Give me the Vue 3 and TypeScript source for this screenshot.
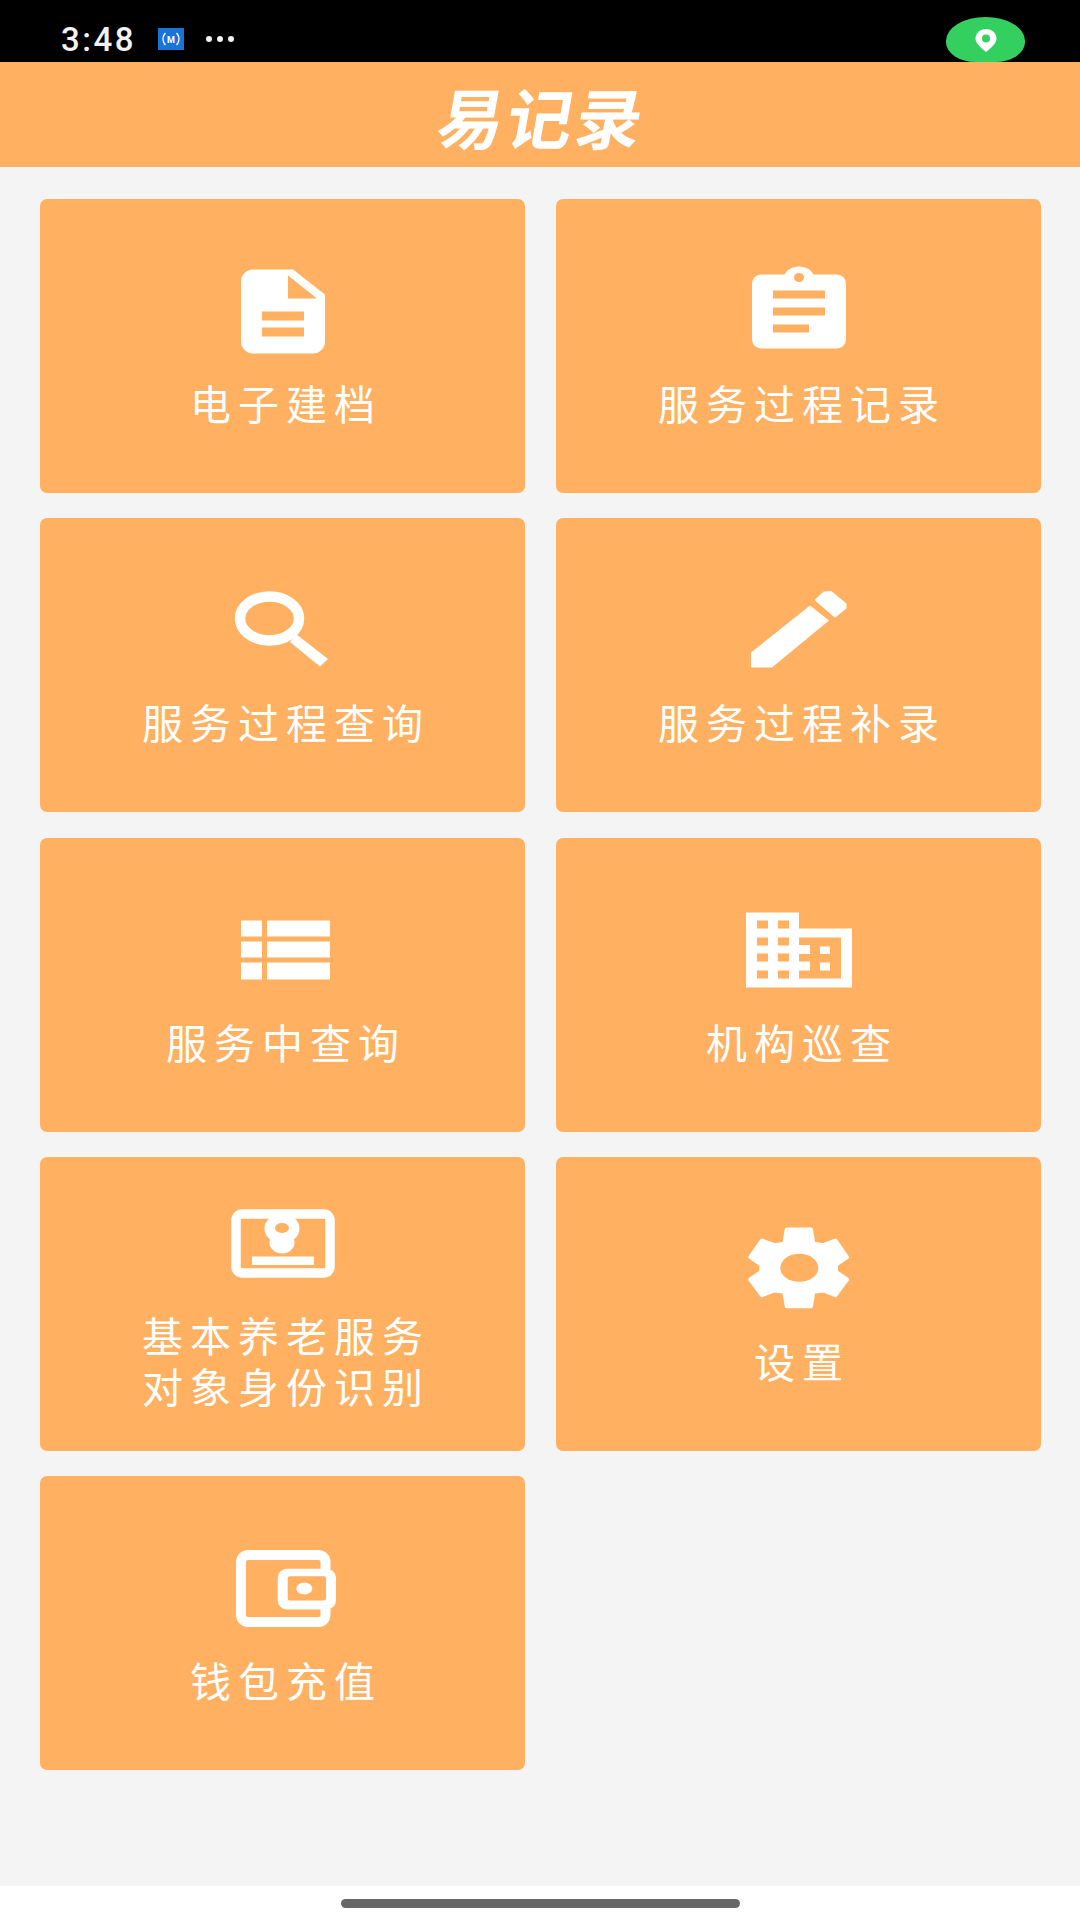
<script setup lang="ts">
interface MenuItem {
  icon: string;
  lines: string[];
}

const items: MenuItem[] = [
  { icon: 'doc', lines: ['电子建档'] },
  { icon: 'clipboard', lines: ['服务过程记录'] },
  { icon: 'search', lines: ['服务过程查询'] },
  { icon: 'pencil', lines: ['服务过程补录'] },
  { icon: 'list', lines: ['服务中查询'] },
  { icon: 'building', lines: ['机构巡查'] },
  { icon: 'idcard', lines: ['基本养老服务', '对象身份识别'] },
  { icon: 'gear', lines: ['设置'] },
  { icon: 'wallet', lines: ['钱包充值'] }
];
</script>

<template>
  <div class="page">
    <div class="status-bar">
      <span class="time">3:48</span>
      <span class="hotspot">
        <svg viewBox="0 0 26 22" width="26" height="22">
          <path d="M7 5.5a9 9 0 0 0 0 11M19 5.5a9 9 0 0 1 0 11" fill="none" stroke="#fff" stroke-width="1.5" stroke-linecap="round" />
          <text x="13" y="14.5" text-anchor="middle" class="hotspot-m">M</text>
        </svg>
      </span>
      <span class="dots"><i></i><i></i><i></i></span>
      <span class="location">
        <svg viewBox="0 0 24 24" width="24" height="24">
          <path d="M12 1C6 1 1.5 5.4 1.5 10.8 1.5 15.5 7.5 20.5 12 24c4.5-3.5 10.5-8.5 10.5-13.2C22.5 5.4 18 1 12 1z" fill="#fff" />
          <circle cx="12" cy="10.5" r="4" fill="#34d05f" />
        </svg>
      </span>
    </div>

    <header class="title-bar">
      <h1 class="title">易记录</h1>
    </header>

    <main class="content">
      <div class="menu">
        <div v-for="item in items" :key="item.icon" class="card">
          <svg class="icon" viewBox="0 0 120 100" width="120" height="100">
            <template v-if="item.icon === 'doc'">
              <path d="M30 8.5H70L102 33.5V80.5a12 12 0 0 1-12 12H30a12 12 0 0 1-12-12V20.5a12 12 0 0 1 12-12z" fill="#fff" />
              <path class="cut" d="M65 14.5L94 37.5H65z" />
              <rect class="cut" x="39" y="50.5" width="42" height="9" />
              <rect class="cut" x="39" y="66.5" width="42" height="9" />
            </template>

            <template v-else-if="item.icon === 'clipboard'">
              <rect x="13" y="13.5" width="94" height="74" rx="9" fill="#fff" />
              <path d="M45 15c2-6 8-9.5 15-9.5S73 9 75 15z" fill="#fff" />
              <ellipse class="cut" cx="60" cy="16.5" rx="5" ry="4.5" />
              <rect class="cut" x="34" y="29.5" width="52" height="8" />
              <rect class="cut" x="34" y="46.5" width="52" height="8" />
              <rect class="cut" x="34" y="63.5" width="36" height="8" />
            </template>

            <template v-else-if="item.icon === 'search'">
              <ellipse cx="46.5" cy="38.5" rx="29.5" ry="22" fill="none" stroke="#fff" stroke-width="10.5" />
              <path d="M73 54L105 79 97 86.5 67 62z" fill="#fff" />
            </template>

            <template v-else-if="item.icon === 'pencil'">
              <path d="M71 25.5L90 40.5 33 87.5H12V72.5z" fill="#fff" />
              <path
                d="M77 20L85 12.5 92 12 106.5 24V28L96 36.5z"
                fill="#fff"
                stroke="#fff"
                stroke-width="2"
                stroke-linejoin="round"
              />
            </template>

            <template v-else-if="item.icon === 'list'">
              <rect x="18" y="20.5" width="21" height="16" fill="#fff" />
              <rect x="44" y="20.5" width="63" height="16" fill="#fff" />
              <rect x="18" y="41.5" width="21" height="16" fill="#fff" />
              <rect x="44" y="41.5" width="63" height="16" fill="#fff" />
              <rect x="18" y="62.5" width="21" height="17" fill="#fff" />
              <rect x="44" y="62.5" width="63" height="17" fill="#fff" />
            </template>

            <template v-else-if="item.icon === 'building'">
              <path d="M7 12.5H60V28.5H113V87.5H7z" fill="#fff" />
              <rect class="cut" x="60" y="37.5" width="42" height="41" />
              <rect x="60" y="45" width="11" height="9" fill="#fff" />
              <rect x="60" y="61.5" width="11" height="9" fill="#fff" />
              <rect x="81" y="46.5" width="10" height="7.5" fill="#fff" />
              <rect x="81" y="62.5" width="10" height="8" fill="#fff" />
              <rect class="cut" x="18" y="20.5" width="11" height="8" />
              <rect class="cut" x="39" y="20.5" width="11" height="8" />
              <rect class="cut" x="18" y="37.5" width="11" height="8" />
              <rect class="cut" x="39" y="37.5" width="11" height="8" />
              <rect class="cut" x="18" y="53.5" width="11" height="8" />
              <rect class="cut" x="39" y="53.5" width="11" height="8" />
              <rect class="cut" x="18" y="70.5" width="11" height="8" />
              <rect class="cut" x="39" y="70.5" width="11" height="8" />
            </template>

            <template v-else-if="item.icon === 'idcard'">
              <rect x="13" y="21" width="94" height="59" rx="6" fill="none" stroke="#fff" stroke-width="9.5" />
              <ellipse cx="59" cy="35.5" rx="17.5" ry="15" fill="#fff" />
              <ellipse cx="59" cy="49.5" rx="12.5" ry="11" fill="#fff" />
              <ellipse class="cut" cx="59" cy="35" rx="7" ry="5" />
              <rect x="29" y="63.5" width="62" height="8.5" fill="#fff" />
            </template>

            <template v-else-if="item.icon === 'gear'">
              <path
                d="M47.7 10.5H72L74.3 24.8 84.3 26.2 96.3 21.5 108 38.2 97 45.5V52.8L108 60.5 96.3 76.2 84.3 71.5 74.3 72.8 72 87.2H47.7L45.3 72.8 35.3 71.5 23 76.2 11.3 60.5 22.3 52.8V45.5L11.3 38.2 23 21.5 35.3 26.2 45.3 24.8z"
                fill="#fff"
                stroke="#fff"
                stroke-width="4"
                stroke-linejoin="round"
              />
              <ellipse class="cut" cx="60.3" cy="48.8" rx="19" ry="14" />
            </template>

            <template v-else-if="item.icon === 'wallet'">
              <path
                d="M102.5 31V24a7 7 0 0 0-7-7H25a7 7 0 0 0-7 7V77a7 7 0 0 0 7 7H95.5a7 7 0 0 0 7-7V71"
                fill="none"
                stroke="#fff"
                stroke-width="10"
              />
              <rect x="54.7" y="30.8" width="58.3" height="40.7" rx="9" fill="#fff" />
              <rect class="cut" x="64.7" y="38.2" width="38.3" height="24.3" rx="2" />
              <ellipse cx="81.3" cy="50.5" rx="8" ry="6" fill="#fff" />
            </template>
          </svg>
          <div class="label">
            <div v-for="line in item.lines" :key="line">{{ line }}</div>
          </div>
        </div>
      </div>
    </main>

    <footer class="home-area">
      <div class="home-bar"></div>
    </footer>
  </div>
</template>

<style>
html,
body {
  margin: 0;
  background: #fff;
}
</style>

<style scoped>
.page {
  display: flex;
  flex-direction: column;
  width: 1080px;
  height: 1920px;
  overflow: hidden;
  font-family: 'Noto Sans CJK SC', 'Noto Sans', sans-serif;
}

.status-bar {
  display: flex;
  align-items: center;
  flex: 0 0 62px;
  padding-left: 61px;
  background: #000;
  color: #f2f2f2;
}

.time {
  width: 97px;
  margin-top: 16px;
  font-family: Roboto, sans-serif;
  font-size: 33px;
  font-weight: 500;
  letter-spacing: 2.5px;
}

.hotspot {
  display: flex;
  width: 26px;
  height: 22px;
  margin-top: 16px;
  background: #1a74d8;
}

.hotspot-m {
  fill: #fff;
  font-family: Roboto, sans-serif;
  font-size: 9px;
  font-weight: 700;
}

.dots {
  display: flex;
  gap: 5px;
  margin: 16px 0 0 22px;
}

.dots i {
  width: 6px;
  height: 6px;
  border-radius: 50%;
  background: #f2f2f2;
}

.location {
  display: flex;
  align-items: center;
  justify-content: center;
  width: 79px;
  height: 45px;
  margin: 17px 0 0 712px;
  border-radius: 40px 40px 30px 30px / 24px 24px 20px 20px;
  background: #34d05f;
}

.title-bar {
  display: flex;
  align-items: center;
  justify-content: center;
  flex: 0 0 105px;
  padding-left: 4px;
  background: #ffb061;
}

.title {
  margin: 0;
  color: #fff;
  font-size: 66px;
  font-weight: 700;
  line-height: 1;
  letter-spacing: 3px;
  transform: skewX(-10deg);
}

.content {
  flex: 1;
  padding: 32px 39px 0 40px;
  background: #f4f4f4;
}

.menu {
  display: grid;
  grid-template-columns: 485px 485px;
  grid-auto-rows: 294px;
  column-gap: 31px;
  row-gap: 25.3px;
}

.card {
  display: flex;
  flex-direction: column;
  align-items: center;
  justify-content: center;
  gap: 16px;
  padding-bottom: 3px;
  box-sizing: border-box;
  border-radius: 7px;
  background: #ffb061;
}

.icon {
  flex: none;
  display: block;
}

.cut {
  fill: #ffb061;
}

.label {
  margin-right: -7px;
  color: #fff;
  font-size: 41px;
  line-height: 51px;
  letter-spacing: 7px;
  text-align: center;
}

.home-area {
  display: flex;
  justify-content: center;
  flex: 0 0 34px;
  padding-top: 13px;
  box-sizing: border-box;
  background: #fff;
}

.home-bar {
  width: 399px;
  height: 9px;
  border-radius: 5px;
  background: #666;
}
</style>
